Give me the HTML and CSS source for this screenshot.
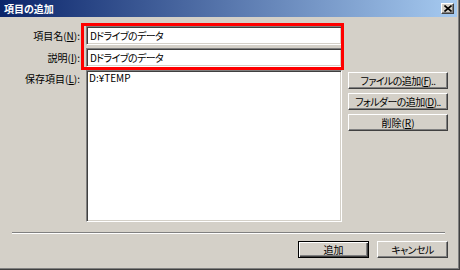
FILE: index.html
```html
<!DOCTYPE html>
<html lang="ja">
<head>
  <meta charset="UTF-8">
  <title>項目の追加</title>
  <link rel="stylesheet" href="styles.css">
</head>
<body>
  <div class="window">
    <div class="titlebar">
      <span class="title">項目の追加</span>
      <span class="close">
        <svg width="8" height="7" viewBox="0 0 8 7">
          <path d="M0.5 0.5 L7.5 6.5 M7.5 0.5 L0.5 6.5" stroke="#000" stroke-width="1.6" fill="none"/>
        </svg>
      </span>
    </div>

    <div class="content">
      <div class="form">
        <label class="label">項目名(<u>N</u>):</label>
        <input class="field" type="text" value="Dドライブのデータ">
        <span></span>

        <label class="label">説明(<u>I</u>):</label>
        <input class="field" type="text" value="Dドライブのデータ">
        <span></span>

        <label class="label row3">保存項目(<u>L</u>):</label>
        <div class="listbox row3">D:¥TEMP</div>
        <div class="side row3">
          <button class="btn kana">ファイルの追加(<u>F</u>)..</button>
          <button class="btn kana">フォルダーの追加(<u>D</u>)..</button>
          <button class="btn">削除(<u>R</u>)</button>
        </div>
      </div>

      <div class="sep"></div>

      <div class="actions">
        <button class="btn btn-default">追加</button>
        <button class="btn kana">キャンセル</button>
      </div>
    </div>

    <div class="mark"></div>
  </div>
</body>
</html>
```

FILE: styles.css
```css
body {
  margin: 0;
  background: #d4d0c8;
  font-family: "Noto Sans CJK JP", "DejaVu Sans", sans-serif;
  font-size: 10px;
  font-feature-settings: "palt";
  color: #000;
}

.window {
  position: relative;
  width: 460px;
  height: 270px;
  box-sizing: border-box;
  background: #d4d0c8;
  border-right: 1px solid #404040;
  border-bottom: 1px solid #404040;
  box-shadow: inset -1px -1px #808080;
}

.titlebar {
  height: 17px;
  margin-right: 2px;
  display: flex;
  align-items: center;
  justify-content: space-between;
  padding: 0 3px 0 4px;
  background: linear-gradient(to right, #0a246a, #a6caf0);
}

.title {
  color: #fff;
  font-weight: bold;
  font-size: 10px;
  line-height: 17px;
}

.close {
  box-sizing: border-box;
  width: 13px;
  height: 11px;
  display: flex;
  align-items: center;
  justify-content: center;
  background: #d4d0c8;
  border: 1px solid;
  border-color: #fff #404040 #404040 #fff;
  box-shadow: inset -1px -1px #808080;
}

.content {
  padding-top: 9px;
}

.form {
  display: grid;
  grid-template-columns: 80px 256px 100px;
  grid-template-rows: 19px 19px auto;
  column-gap: 6px;
  row-gap: 3px;
}

.label {
  text-align: right;
  line-height: 19px;
  white-space: nowrap;
}

.row3 {
  margin-top: 2px;
}

.label.row3 {
  line-height: 14px;
}

.field,
.listbox {
  box-sizing: border-box;
  border: 1px solid;
  border-color: #808080 #fff #fff #808080;
  box-shadow: inset 1px 1px #404040, inset -1px -1px #d4d0c8;
  background: #fff;
  font: inherit;
  margin: 0;
}

.field {
  width: 256px;
  height: 19px;
  padding: 0 3px;
  letter-spacing: -0.6px;
}

.listbox {
  height: 152px;
  padding: 1px 2px;
  line-height: 12px;
}

.side {
  display: flex;
  flex-direction: column;
  gap: 4px;
}

.btn {
  box-sizing: border-box;
  height: 17px;
  padding: 0;
  margin: 0;
  font: inherit;
  color: #000;
  white-space: nowrap;
  background: #d4d0c8;
  border: 1px solid;
  border-color: #fff #404040 #404040 #fff;
  box-shadow: inset -1px -1px #808080, inset 1px 1px #d4d0c8;
}

.kana {
  letter-spacing: -0.6px;
}

.sep {
  margin: 10px 14px 0 12px;
  height: 0;
  border-top: 1px solid #808080;
  border-bottom: 1px solid #fff;
}

.actions {
  display: flex;
  justify-content: flex-end;
  gap: 8px;
  margin-top: 7px;
  padding-right: 11px;
}

.actions .btn {
  width: 71px;
  height: 17px;
}

.btn-default {
  border: 1px solid #000;
  box-shadow: inset 1px 1px #fff, inset -1px -1px #404040, inset -2px -2px #808080;
}

/* red highlight drawn over the two text boxes */
.mark {
  position: absolute;
  left: 81px;
  top: 23px;
  width: 263px;
  height: 47px;
  box-sizing: border-box;
  border: 3px solid #ff0000;
  pointer-events: none;
}
```
